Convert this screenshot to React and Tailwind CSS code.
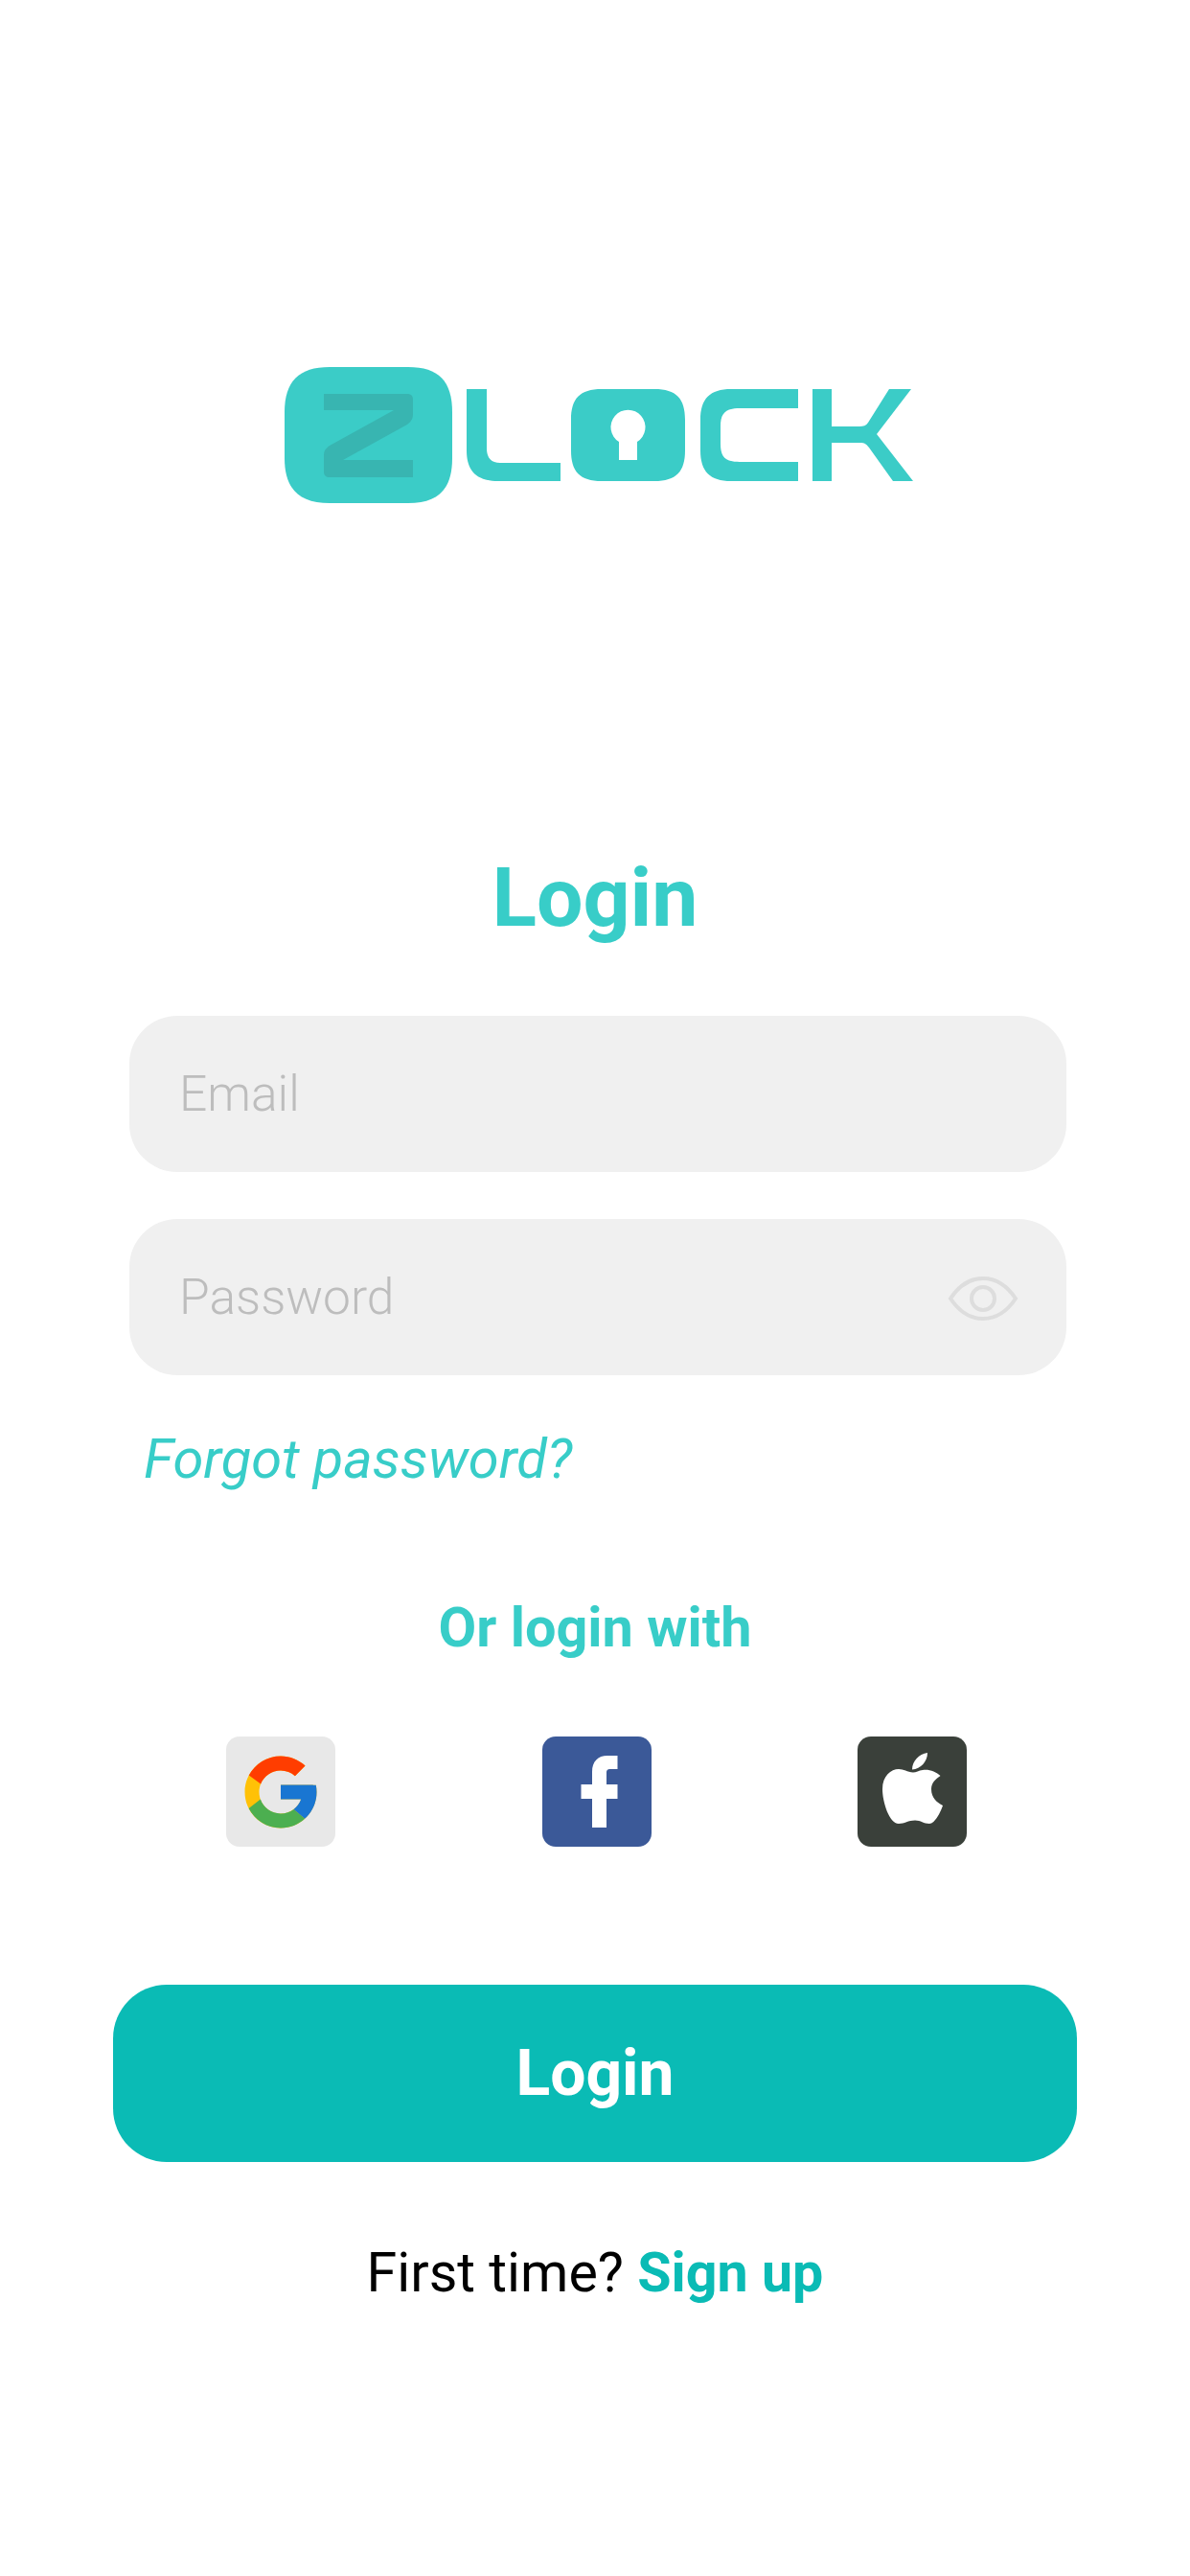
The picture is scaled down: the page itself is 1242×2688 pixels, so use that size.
import { FcGoogle } from 'react-icons/fc';

function Logo() {
  return (
    <svg width="660" height="148" viewBox="296 380 660 148" className="block">
      {/* tile */}
      <path
        d="M344 383H426C458 383 472 398 472 430V478C472 510 458 525 426 525H344C312 525 297 510 297 478V430C297 398 312 383 344 383Z"
        fill="#3bccc7"
      />
      {/* Z */}
      <path
        d="M338 411H425C429 411 431 413 431 417V432C431 437 429 440 425 443L358 480H431V498H344C340 498 338 496 338 492V475C338 470 340 468 344 465L411 428H338Z"
        fill="#38b5b1"
      />
      {/* L */}
      <path d="M487 406H508V468C508 478 513 483 522 483H585V502H520C496 502 487 490 487 470Z" fill="#3bccc7" />
      {/* O with keyhole */}
      <path
        fillRule="evenodd"
        d="M628 406H683C706 406 715 416 715 438V470C715 492 706 502 683 502H628C605 502 596 492 596 470V438C596 416 605 406 628 406ZM646 480V461A18 18 0 1 1 665 461V480Z"
        fill="#3bccc7"
      />
      {/* C */}
      <path d="M763 406H833V426H772C757 426 752 431 752 445V463C752 477 757 482 772 482H833V502H763C741 502 731 492 731 470V438C731 416 741 406 763 406Z" fill="#3bccc7" />
      {/* K */}
      <path d="M848 406H868V445H897C901 445 904 444 906 441L928 406H951L915 453L953 502H932L907 467C904 463 902 462 898 462H868V502H848Z" fill="#3bccc7" />
    </svg>
  );
}

function EyeIcon() {
  return (
    <svg width="74" height="48" viewBox="0 0 74 48" fill="none" stroke="#dddddd" strokeWidth="4" className="mt-[3px]">
      <path d="M3 24C13 9 25 3 37 3C49 3 61 9 71 24C61 39 49 45 37 45C25 45 13 39 3 24Z" />
      <circle cx="37" cy="24" r="12" />
    </svg>
  );
}

function FacebookIcon() {
  return (
    <svg viewBox="0 0 114 115" className="w-full h-full">
      <path d="M52 95V65H40.5V50H52V37C52 26 58 20 68 20H78.5V34H71C68 34 67 35 67 38V50H78.5V65H67V95Z" fill="#ffffff" />
    </svg>
  );
}

function AppleIcon() {
  return (
    <svg viewBox="0 0 114 115" className="w-full h-full">
      <path
        d="M58 37.5C52 37 48 34 43 34C35 34 26 41 26 55C26 68 33 91 43 91C49 91 53 87.5 60 87.5C66 87.5 69 91 75 91C81 91 87 78 89 72C83 69 77 64 77 55C77 48 82 44 86.5 41C82 37 75 34 68 35C64 35.5 61 37.5 58 37.5Z"
        fill="#ffffff"
      />
      <path d="M57 34.5C57 26 64 18 73 17C73 26 66 34 57 34.5Z" fill="#ffffff" />
    </svg>
  );
}

export default function App() {
  return (
    <div className="min-h-[2688px] bg-white flex flex-col items-center font-['Roboto',sans-serif]">
      {/* Logo */}
      <div className="mt-[380px] self-start ml-[296px]">
        <Logo />
      </div>

      <h1 className="mt-[359px] text-[86px] leading-[100px] font-bold text-[#38cdc8]">Login</h1>

      {/* Fields */}
      <div className="mt-[73px] self-start ml-[135px] w-[978px] flex flex-col gap-[49px]">
        <div className="h-[163px] rounded-[50px] bg-[#f0f0f0] flex items-center pl-[52px] pr-[50px]">
          <span className="text-[51.5px] font-light text-[#bdbdbd]">Email</span>
        </div>
        <div className="h-[163px] rounded-[50px] bg-[#f0f0f0] flex items-center justify-between pl-[52px] pr-[50px]">
          <span className="text-[51.5px] font-light text-[#bdbdbd]">Password</span>
          <EyeIcon />
        </div>
      </div>

      <div className="self-start ml-[150px] mt-[53px]">
        <span className="text-[57.8px] leading-[68px] italic font-normal text-[#38cdc8]">Forgot password?</span>
      </div>

      <p className="mt-[109px] text-[57.6px] leading-[68px] font-bold text-[#38cdc8]">Or login with</p>

      {/* Social buttons */}
      <div className="mt-[79px] self-start ml-[236px] w-[773px] flex justify-between">
        <div className="w-[114px] h-[115px] rounded-[14px] bg-[#e8e8e8] flex items-center justify-center">
          <FcGoogle size={90} />
        </div>
        <div className="w-[114px] h-[115px] rounded-[14px] bg-[#3b5998]">
          <FacebookIcon />
        </div>
        <div className="w-[114px] h-[115px] rounded-[14px] bg-[#3a403a]">
          <AppleIcon />
        </div>
      </div>

      <button className="mt-[144px] w-[1006px] h-[185px] rounded-[56px] bg-[#0abbb5] text-white text-[66px] font-bold">
        Login
      </button>

      <p className="mt-[82px] text-[57.4px] leading-[68px] text-black">
        First time? <span className="font-bold text-[#0abbb5]">Sign up</span>
      </p>
    </div>
  );
}
